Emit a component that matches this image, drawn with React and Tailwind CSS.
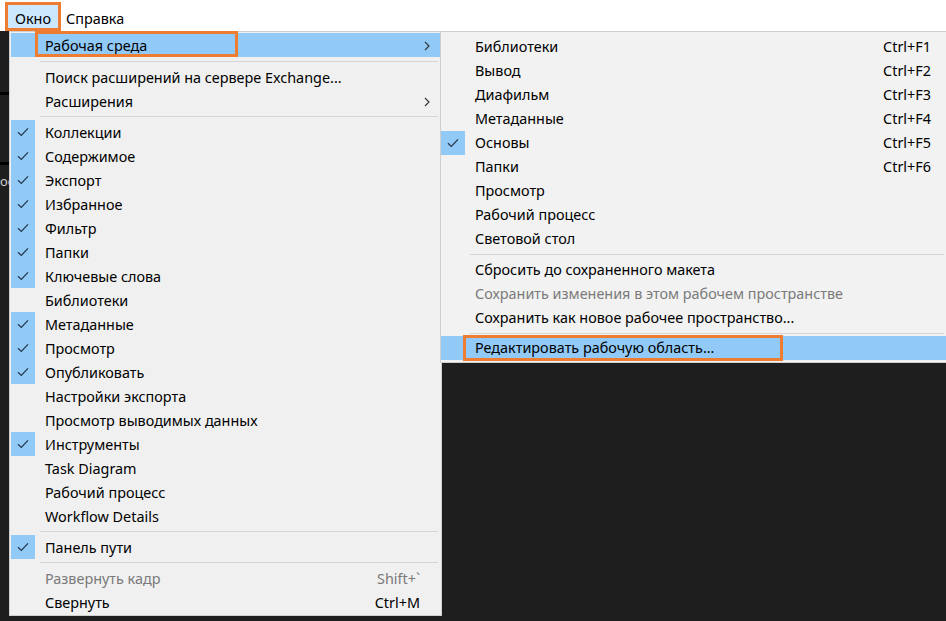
import React from 'react';

const font = { fontFamily: '"Segoe UI", "Noto Sans", "Open Sans", sans-serif' };

function Check() {
  return (
    <svg width="12" height="10" viewBox="0 0 12 10" fill="none">
      <path d="M1 5.2 L4.3 8.4 L11 1.4" stroke="#26384d" strokeWidth="1.3" />
    </svg>
  );
}

function Chevron() {
  return (
    <svg width="6" height="10" viewBox="0 0 6 10" fill="none">
      <path d="M1 1 L5 5 L1 9" stroke="#333" strokeWidth="1.1" />
    </svg>
  );
}

// main menu rows
const mainItems = [
  { label: 'Рабочая среда', sub: true, active: true },
  { sep: 8 },
  { label: 'Поиск расширений на сервере Exchange...' },
  { label: 'Расширения', sub: true },
  { sep: 7 },
  { label: 'Коллекции', checked: true },
  { label: 'Содержимое', checked: true },
  { label: 'Экспорт', checked: true },
  { label: 'Избранное', checked: true },
  { label: 'Фильтр', checked: true },
  { label: 'Папки', checked: true },
  { label: 'Ключевые слова', checked: true },
  { label: 'Библиотеки' },
  { label: 'Метаданные', checked: true },
  { label: 'Просмотр', checked: true },
  { label: 'Опубликовать', checked: true },
  { label: 'Настройки экспорта' },
  { label: 'Просмотр выводимых данных' },
  { label: 'Инструменты', checked: true },
  { label: 'Task Diagram' },
  { label: 'Рабочий процесс' },
  { label: 'Workflow Details' },
  { sep: 7 },
  { label: 'Панель пути', checked: true },
  { sep: 7 },
  { label: 'Развернуть кадр', shortcut: 'Shift+`', disabled: true },
  { label: 'Свернуть', shortcut: 'Ctrl+M' },
];

const subItems = [
  { label: 'Библиотеки', shortcut: 'Ctrl+F1' },
  { label: 'Вывод', shortcut: 'Ctrl+F2' },
  { label: 'Диафильм', shortcut: 'Ctrl+F3' },
  { label: 'Метаданные', shortcut: 'Ctrl+F4' },
  { label: 'Основы', shortcut: 'Ctrl+F5', checked: true },
  { label: 'Папки', shortcut: 'Ctrl+F6' },
  { label: 'Просмотр' },
  { label: 'Рабочий процесс' },
  { label: 'Световой стол' },
  { sep: 7 },
  { label: 'Сбросить до сохраненного макета' },
  { label: 'Сохранить изменения в этом рабочем пространстве', disabled: true },
  { label: 'Сохранить как новое рабочее пространство...' },
  { sep: 6 },
  { label: 'Редактировать рабочую область...', active: true },
];

function Sep({ h }) {
  return (
    <div className="flex items-center pl-[29px] pr-[2px]" style={{ height: h }}>
      <div className="h-px w-full bg-[#d5d5d5]" />
    </div>
  );
}

function MainRow({ item }) {
  return (
    <div className={`flex h-[24px] items-center ${item.active ? 'bg-[#91c9f7]' : ''}`}>
      <div className={`flex h-full w-[24px] shrink-0 items-center justify-center ${item.checked ? 'bg-[#91c9f7]' : ''}`}>
        {item.checked && <Check />}
      </div>
      <div className="relative flex h-full flex-1 items-center pl-[10px] pr-[20px] pt-[2px]">
        {item.active && (
          <div className="absolute left-0 top-[-2px] h-[26px] w-[203px] border-[3px] border-[#ee7d31]" />
        )}
        <span className={`flex-1 ${item.disabled ? 'text-[#7a7a7a]' : 'text-black'}`}>{item.label}</span>
        {item.shortcut && (
          <span className={item.disabled ? 'text-[#7a7a7a]' : 'text-black'}>{item.shortcut}</span>
        )}
        {item.sub && (
          <span className="mr-[-10px] flex items-center">
            <Chevron />
          </span>
        )}
      </div>
    </div>
  );
}

function SubRow({ item }) {
  return (
    <div className={`flex h-[24px] items-center ${item.active ? 'bg-[#91c9f7]' : ''}`}>
      <div className={`flex h-full w-[24px] shrink-0 items-center justify-center ${item.checked ? 'bg-[#91c9f7]' : ''}`}>
        {item.checked && <Check />}
      </div>
      <div className="relative flex h-full flex-1 items-center pl-[10px] pr-[15px] pt-[1px]">
        {item.active && (
          <div className="absolute left-[-2px] top-[-1px] h-[26px] w-[320px] border-[3px] border-[#ee7d31]" />
        )}
        <span className={`flex-1 ${item.disabled ? 'text-[#7a7a7a]' : 'text-black'}`}>{item.label}</span>
        {item.shortcut && <span className="text-black">{item.shortcut}</span>}
      </div>
    </div>
  );
}

export default function App() {
  return (
    <div className="h-[621px] w-[946px] overflow-hidden bg-[#1e1e1e] text-[14.4px] leading-none" style={font}>
      {/* menu bar */}
      <div className="flex h-[31px] items-start bg-white">
        <div className="relative ml-[7px] mt-[4px] flex h-[25px] items-center bg-[#cce8ff] px-[8px] pt-[6px]">
          <div className="absolute inset-[-2px] border-[3px] border-[#ee7d31]" />
          <span>Окно</span>
        </div>
        <div className="ml-[7px] mt-[4px] flex h-[25px] items-center pt-[6px]">Справка</div>
      </div>

      <div className="flex">
        {/* app panel edge */}
        <div className="flex w-[9px] flex-col bg-[#1e1e1e]">
          <div className="h-[61px]" />
          <div className="h-[3px] bg-black" />
          <div className="h-[67px]" />
          <div className="h-[3px] bg-black" />
          <div className="pt-[10px] text-[13px] text-[#d0d0d0]">ое</div>
        </div>

        {/* main menu */}
        <div className="h-[585px] w-[433px] border border-[#cfcfcf] bg-[#f0f0f0] p-[1px]">
          {mainItems.map((it, i) =>
            it.sep ? <Sep key={i} h={it.sep} /> : <MainRow key={i} item={it} />
          )}
        </div>

        {/* submenu + dark area */}
        <div className="flex flex-1 flex-col">
          <div className="ml-[-2px] h-[332px] border-y border-l border-[#cfcfcf] bg-[#f2f2f2] pt-[3px]">
            {subItems.map((it, i) =>
              it.sep ? <Sep key={i} h={it.sep} /> : <SubRow key={i} item={it} />
            )}
          </div>
        </div>
      </div>
    </div>
  );
}
